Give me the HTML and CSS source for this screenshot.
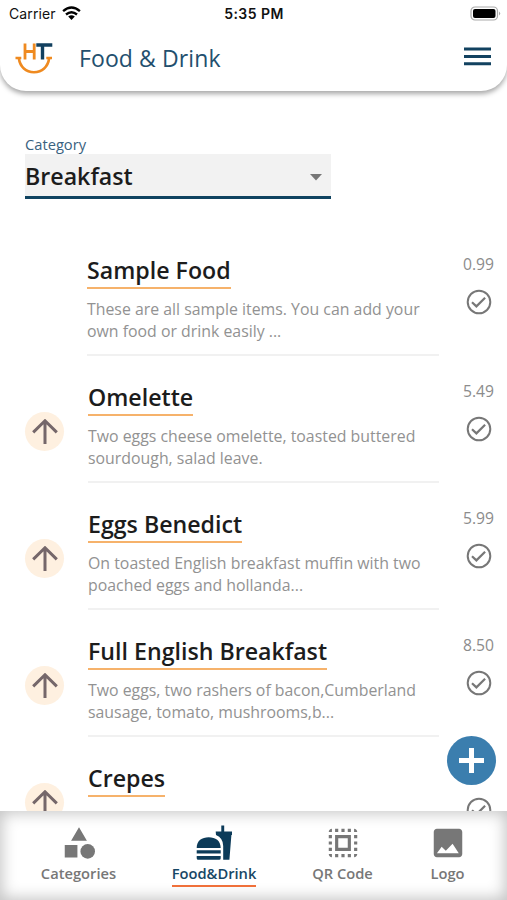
FILE: index.html
```html
<!DOCTYPE html>
<html lang="en">
<head>
<meta charset="utf-8">
<title>Food &amp; Drink</title>
<link rel="stylesheet" href="styles.css">
</head>
<body>
<svg class="defs" width="0" height="0">
  <symbol id="check" viewBox="0 0 26 26"><circle cx="13" cy="13" r="11.3" fill="none" stroke="#777" stroke-width="2"/><path d="M6 13.2l4.4 4.2 8.7-8.6" fill="none" stroke="#777" stroke-width="2.2"/></symbol>
  <symbol id="up" viewBox="0 0 26 26"><path d="M13 25V2M1.2 13.4L13 1.8l11.800 11.600" fill="none" stroke="#75676a" stroke-width="3"/></symbol>
</svg>
<div class="app">
  <header class="header">
    <div class="status">
      <div class="carrier"><span>Carrier</span>
        <svg width="19" height="14" viewBox="0 0 19 14"><g fill="none" stroke="#000" stroke-width="2.400"><path d="M1.100 5.200Q9.500-2.100 17.900 5.200"/><path d="M4 8.500Q9.500 3.900 15 8.500"/></g><path d="M6.200 10.600Q9.500 8 12.800 10.600L9.500 14z"/></svg>
      </div>
      <span class="time">5:35 PM</span>
      <svg class="battery" width="31" height="16" viewBox="0 0 31 16"><rect x="1" y="1" width="26.500" height="13" rx="4" fill="#fff" stroke="#aaa" stroke-width="1.200"/><rect x="3" y="3" width="22.500" height="9" rx="2"/><path d="M29 5.500q2.400 2 0 4z" fill="#aaa"/></svg>
    </div>
    <div class="bar">
      <svg class="brand" width="38" height="32" viewBox="0 0 38 32"><g fill="none" stroke="#ef8a20" stroke-width="2.800"><path d="M10 1.500V17.500M19.200 1.500V17.500M10 9.500h9"/><path d="M.5 16H6.300M31.300 16H37M3.800 16C5 25 11 30.200 19 30.200S33 25 34.200 16" stroke-width="2.600"/></g><path d="M21.300 3h16M27.500 3v14.500" fill="none" stroke="#12405f" stroke-width="3.400"/></svg>
      <h1>Food &amp; Drink</h1>
      <svg class="menu" width="27" height="19" viewBox="0 0 27 19"><path d="M0 2h27M0 9.500h27M0 16.700h27" stroke="#124260" stroke-width="3"/></svg>
    </div>
  </header>
  <main class="content">
    <div class="field">
      <label>Category</label>
      <div class="select"><span>Breakfast</span><svg width="12" height="7" viewBox="0 0 12 7"><path d="M0 0h12L6 6.500z" fill="#777"/></svg></div>
    </div>
    <ul class="items">
      <li class="item first">
        <div class="move"></div>
        <div class="body"><h2>Sample Food</h2><p>These are all sample items. You can add your<br>own food or drink easily ...</p></div>
        <div class="side"><span>0.99</span><svg width="26" height="26"><use href="#check"/></svg></div>
      </li>
      <li class="item">
        <div class="move"><span class="disc"><svg width="26" height="26"><use href="#up"/></svg></span></div>
        <div class="body"><h2>Omelette</h2><p>Two eggs cheese omelette, toasted buttered<br>sourdough, salad leave.</p></div>
        <div class="side"><span>5.49</span><svg width="26" height="26"><use href="#check"/></svg></div>
      </li>
      <li class="item">
        <div class="move"><span class="disc"><svg width="26" height="26"><use href="#up"/></svg></span></div>
        <div class="body"><h2>Eggs Benedict</h2><p>On toasted English breakfast muffin with two<br>poached eggs and hollanda...</p></div>
        <div class="side"><span>5.99</span><svg width="26" height="26"><use href="#check"/></svg></div>
      </li>
      <li class="item">
        <div class="move"><span class="disc"><svg width="26" height="26"><use href="#up"/></svg></span></div>
        <div class="body"><h2>Full English Breakfast</h2><p>Two eggs, two rashers of bacon,Cumberland<br>sausage, tomato, mushrooms,b...</p></div>
        <div class="side"><span>8.50</span><svg width="26" height="26"><use href="#check"/></svg></div>
      </li>
      <li class="item last">
        <div class="move"><span class="disc"><svg width="26" height="26"><use href="#up"/></svg></span></div>
        <div class="body"><h2>Crepes</h2></div>
        <div class="side"><span></span><svg width="26" height="26"><use href="#check"/></svg></div>
      </li>
    </ul>
  </main>
  <button class="fab" aria-label="Add"><svg width="25" height="25" viewBox="0 0 25 25"><path d="M12.500 0v25M0 12.500h25" stroke="#fff" stroke-width="5"/></svg></button>
  <nav class="nav">
    <a class="tab categories"><svg width="38" height="38" viewBox="0 0 24 24"><path d="M12 2l-5 8.500h10zM3 13.200h8v8H3z"/><circle cx="17.500" cy="17.300" r="4.600"/></svg><span>Categories</span></a>
    <a class="tab food active"><svg width="38" height="38" viewBox="0 0 38 38"><path d="M1.700 24C1.700 16.500 7 13.200 13.700 13.200S25.700 16.500 25.700 24zM1.700 26.300h24v3.200h-24zM1.700 32h24v2.200q0 1.600-1.600 1.600H3.300q-1.600 0-1.600-1.600zM26.300 1.500h2.900v6H37V11h-.6l-2 24.700h-6.200V22q0-8-7.200-11l-.3-3.500h5.600z"/></svg><span>Food&amp;Drink</span></a>
    <a class="tab qr"><svg width="38" height="38" viewBox="0 0 24 24"><path d="M3 5h2V3c-1.100 0-2 .9-2 2zm0 8h2v-2H3v2zm4 8h2v-2H7v2zM3 9h2V7H3v2zm10-6h-2v2h2V3zm6 0v2h2c0-1.100-.9-2-2-2zM5 21v-2H3c0 1.100.9 2 2 2zm-2-4h2v-2H3v2zM9 3H7v2h2V3zm2 18h2v-2h-2v2zm8-8h2v-2h-2v2zm0 8c1.100 0 2-.9 2-2h-2v2zm0-12h2V7h-2v2zm0 8h2v-2h-2v2zm-4 4h2v-2h-2v2zm0-16h2V3h-2v2zM7 17h10V7H7v10zm2-8h6v6H9V9z"/></svg><span>QR Code</span></a>
    <a class="tab logo"><svg width="38" height="38" viewBox="0 0 24 24"><path d="M21 19V5c0-1.100-.9-2-2-2H5c-1.100 0-2 .9-2 2v14c0 1.100.9 2 2 2h14c1.100 0 2-.9 2-2zM5 18.500l3-4.200 2.600 2.600 4.300-4.500 3.900 6.100z"/></svg><span>Logo</span></a>
  </nav>
</div>
</body>
</html>
```
FILE: styles.css
```css
* { box-sizing: border-box; }
body { margin: 0; background: #fff; font-family: "Open Sans", sans-serif; }
h1, h2, p, ul { margin: 0; padding: 0; font-weight: 400; }
svg { display: block; flex: none; }
.defs { position: absolute; }
.app { width: 507px; height: 900px; display: flex; flex-direction: column; overflow: hidden; position: relative; }

.header { height: 91px; flex: none; border-radius: 0 0 26px 26px; background: #fff; box-shadow: 0 3px 5px rgba(0,0,0,.34); }
.status { height: 27px; display: grid; grid-template-columns: 1fr auto 1fr; align-items: center; padding: 0 8px 0 9px; font-family: Inter, sans-serif; color: #111; }
.carrier { display: flex; align-items: center; gap: 6px; font-size: 14px; letter-spacing: .1px; }
.carrier svg { margin-top: -2px; }
.time { font-size: 14px; font-weight: 600; letter-spacing: .45px; }
.battery { justify-self: end; margin-right: -2px; margin-left: 1px; }
.bar { height: 62px; display: flex; align-items: center; padding: 0 16px 0 15px; }
.bar h1 { margin-left: 26px; font-size: 23px; color: #234f6e; letter-spacing: .1px; flex: 1; white-space: nowrap; }
.menu { margin-top: -4px; }

.content { flex: 1; min-height: 0; overflow: hidden; padding-top: 43px; }
.field { width: 306px; margin-left: 25px; height: 65px; }
.field label { display: block; height: 20px; line-height: 20px; font-size: 14.700px; color: #3a6280; }
.select { height: 45px; background: #f2f2f2; border-bottom: 3px solid #0f4360; display: flex; align-items: center; justify-content: space-between; padding: 1px 9px 0 0; font-size: 23.200px; font-weight: 600; color: #1c1c1c; }
.select svg { margin-top: 4px; }
.items { list-style: none; margin-top: 56px; }
.item { display: grid; grid-template-columns: 63px 351px 1fr; height: 127px; padding-left: 25px; }
.move { padding-top: 30px; }
.last .move { padding-top: 20px; }
.disc { width: 39px; height: 39px; border-radius: 50%; background: #fef0e0; display: flex; align-items: center; justify-content: center; }
.body { height: 101px; border-bottom: 2px solid #f1f1f1; }
.first .body { margin-left: -1px; }
.last .body { border: 0; }
.body h2 { display: table; height: 34px; line-height: 30px; border-bottom: 2px solid #f6b26b; font-size: 23.180px; font-weight: 600; color: #1c1c1c; white-space: nowrap; }
.body p { margin-top: 9px; font-size: 15.870px; line-height: 22px; color: #929292; white-space: nowrap; }
.side { display: flex; flex-direction: column; align-items: center; padding-left: 11px; }
.side span { height: 18px; line-height: 18px; font-size: 15.700px; color: #8c8c8c; }
.side svg { margin-top: 15.500px; }

.fab { position: absolute; left: 447px; top: 736px; width: 49px; height: 49px; border: 0; border-radius: 50%; background: #3b7eae; padding: 0; display: flex; align-items: center; justify-content: center; }

.nav { height: 89px; flex: none; display: flex; padding: 13px 0 0 34px; background: #fff; box-shadow: inset 0 0 15px 2px rgba(0,0,0,.24); color: #777; fill: #777; }
.tab { display: flex; flex-direction: column; align-items: center; flex: none; }
.tab span { height: 25px; line-height: 22px; font-size: 14.700px; font-weight: 600; white-space: nowrap; }
.categories { width: 89px; }
.food { width: 182px; }
.qr { width: 75px; }
.logo { width: 135px; }
.active { color: #174765; fill: #0c3b59; }
.active span { border-bottom: 2px solid #f0703a; }
```
